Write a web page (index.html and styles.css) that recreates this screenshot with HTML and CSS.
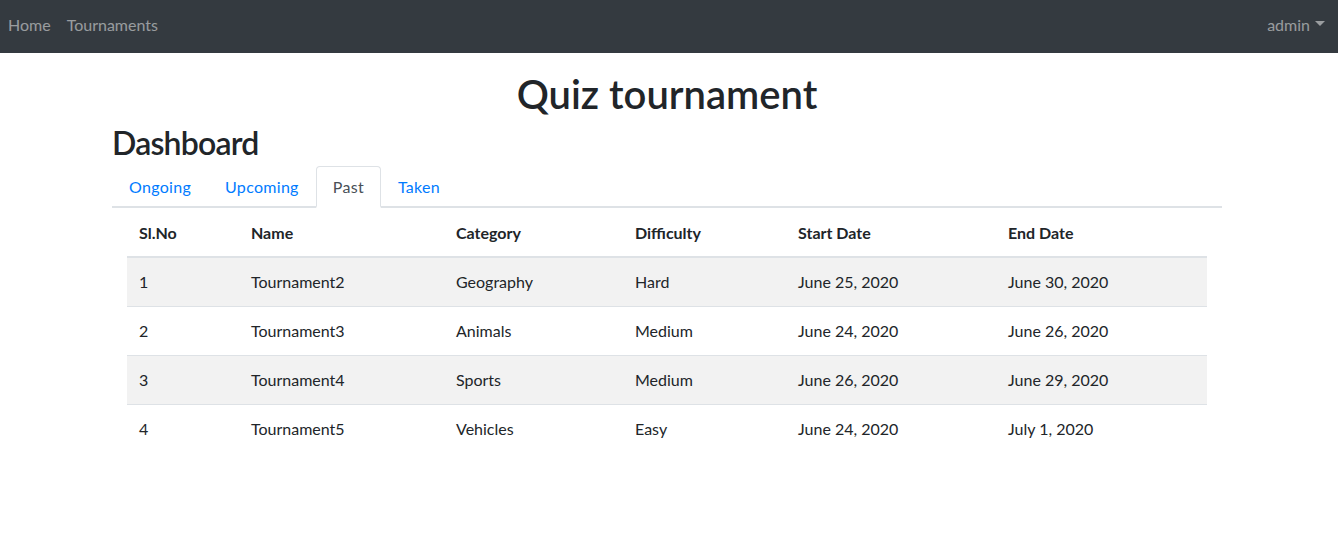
FILE: index.html
```html
<!DOCTYPE html>
<html>
<head>
<meta charset="utf-8">
<link rel="stylesheet" href="styles.css">
</head>
<body>
<nav class="navbar">
  <div class="nav-left">
    <a class="nav-link" href="#">Home</a>
    <a class="nav-link" href="#">Tournaments</a>
  </div>
  <a class="nav-link dropdown" href="#">admin<span class="caret"></span></a>
</nav>
<div class="container">
  <h1 class="title">Quiz tournament</h1>
  <h2 class="subtitle">Dashboard</h2>
  <ul class="tabs">
    <li><a class="tab" href="#">Ongoing</a></li>
    <li><a class="tab" href="#">Upcoming</a></li>
    <li><a class="tab active" href="#">Past</a></li>
    <li><a class="tab" href="#">Taken</a></li>
  </ul>
  <div class="tab-content">
    <table class="table">
      <thead>
        <tr>
          <th class="c1">Sl.No</th>
          <th class="c2">Name</th>
          <th class="c3">Category</th>
          <th class="c4">Difficulty</th>
          <th class="c5">Start Date</th>
          <th class="c6">End Date</th>
        </tr>
      </thead>
      <tbody>
        <tr><td>1</td><td>Tournament2</td><td>Geography</td><td>Hard</td><td>June 25, 2020</td><td>June 30, 2020</td></tr>
        <tr><td>2</td><td>Tournament3</td><td>Animals</td><td>Medium</td><td>June 24, 2020</td><td>June 26, 2020</td></tr>
        <tr><td>3</td><td>Tournament4</td><td>Sports</td><td>Medium</td><td>June 26, 2020</td><td>June 29, 2020</td></tr>
        <tr><td>4</td><td>Tournament5</td><td>Vehicles</td><td>Easy</td><td>June 24, 2020</td><td>July 1, 2020</td></tr>
      </tbody>
    </table>
  </div>
</div>
</body>
</html>
```
FILE: styles.css
```css
* { box-sizing: border-box; }
body {
  margin: 0;
  font-family: "Lato", "Noto Sans", sans-serif;
  font-size: 16px;
  line-height: 1.5;
  color: #212529;
  background: #fff;
}
a { text-decoration: none; }
.navbar {
  background: #343a40;
  height: 53px;
  display: flex;
  align-items: center;
  justify-content: space-between;
  padding: 0 5px 4px 0;
}
.nav-left { display: flex; }
.nav-link {
  color: rgba(255,255,255,.5);
  padding: 0 8px;
  display: flex;
  align-items: center;
}
.caret {
  display: inline-block;
  margin-left: 5px;
  border-top: 5px solid rgba(255,255,255,.5);
  border-left: 5px solid transparent;
  border-right: 5px solid transparent;
  margin-top: -2px;
}
.container {
  width: 1140px;
  margin-left: calc(50% - 572px);
  padding: 0 15px;
}
.title {
  text-align: center;
  font-size: 40px;
  font-weight: 600;
  line-height: 1.2;
  margin: 17px 0 6px;
}
.subtitle {
  font-size: 32px;
  font-weight: 600;
  line-height: 1.2;
  letter-spacing: -0.8px;
  margin: 0 0 4px;
}
.tabs {
  list-style: none;
  margin: 0;
  padding: 0;
  display: flex;
  border-bottom: 2px solid #dee2e6;
}
.tabs li { margin-bottom: -2px; }
.tab {
  display: block;
  padding: 8px 16px;
  color: #007bff;
  border: 1px solid transparent;
  border-bottom: 0;
  border-radius: 4px 4px 0 0;
  height: 42px;
  letter-spacing: 0.3px;
}
.tab.active {
  color: #495057;
  background: #fff;
  border-color: #dee2e6;
  border-bottom: 2px solid #fff;
}
.tab-content { padding: 0 15px; }
.table {
  width: 100%;
  border-collapse: collapse;
  table-layout: fixed;
}
.table th, .table td {
  text-align: left;
  padding: 12px;
  vertical-align: top;
}
.table th {
  font-weight: 700;
  border-bottom: 2px solid #dee2e6;
  padding: 13px 12px 11px;
}
.table td { border-top: 1px solid #dee2e6; }
.table tbody tr:nth-child(odd) { background: #f2f2f2; }
.c1 { width: 112px; }
.c2 { width: 205px; }
.c3 { width: 179px; }
.c4 { width: 163px; }
.c5 { width: 210px; }
.c6 { width: 211px; }
```
